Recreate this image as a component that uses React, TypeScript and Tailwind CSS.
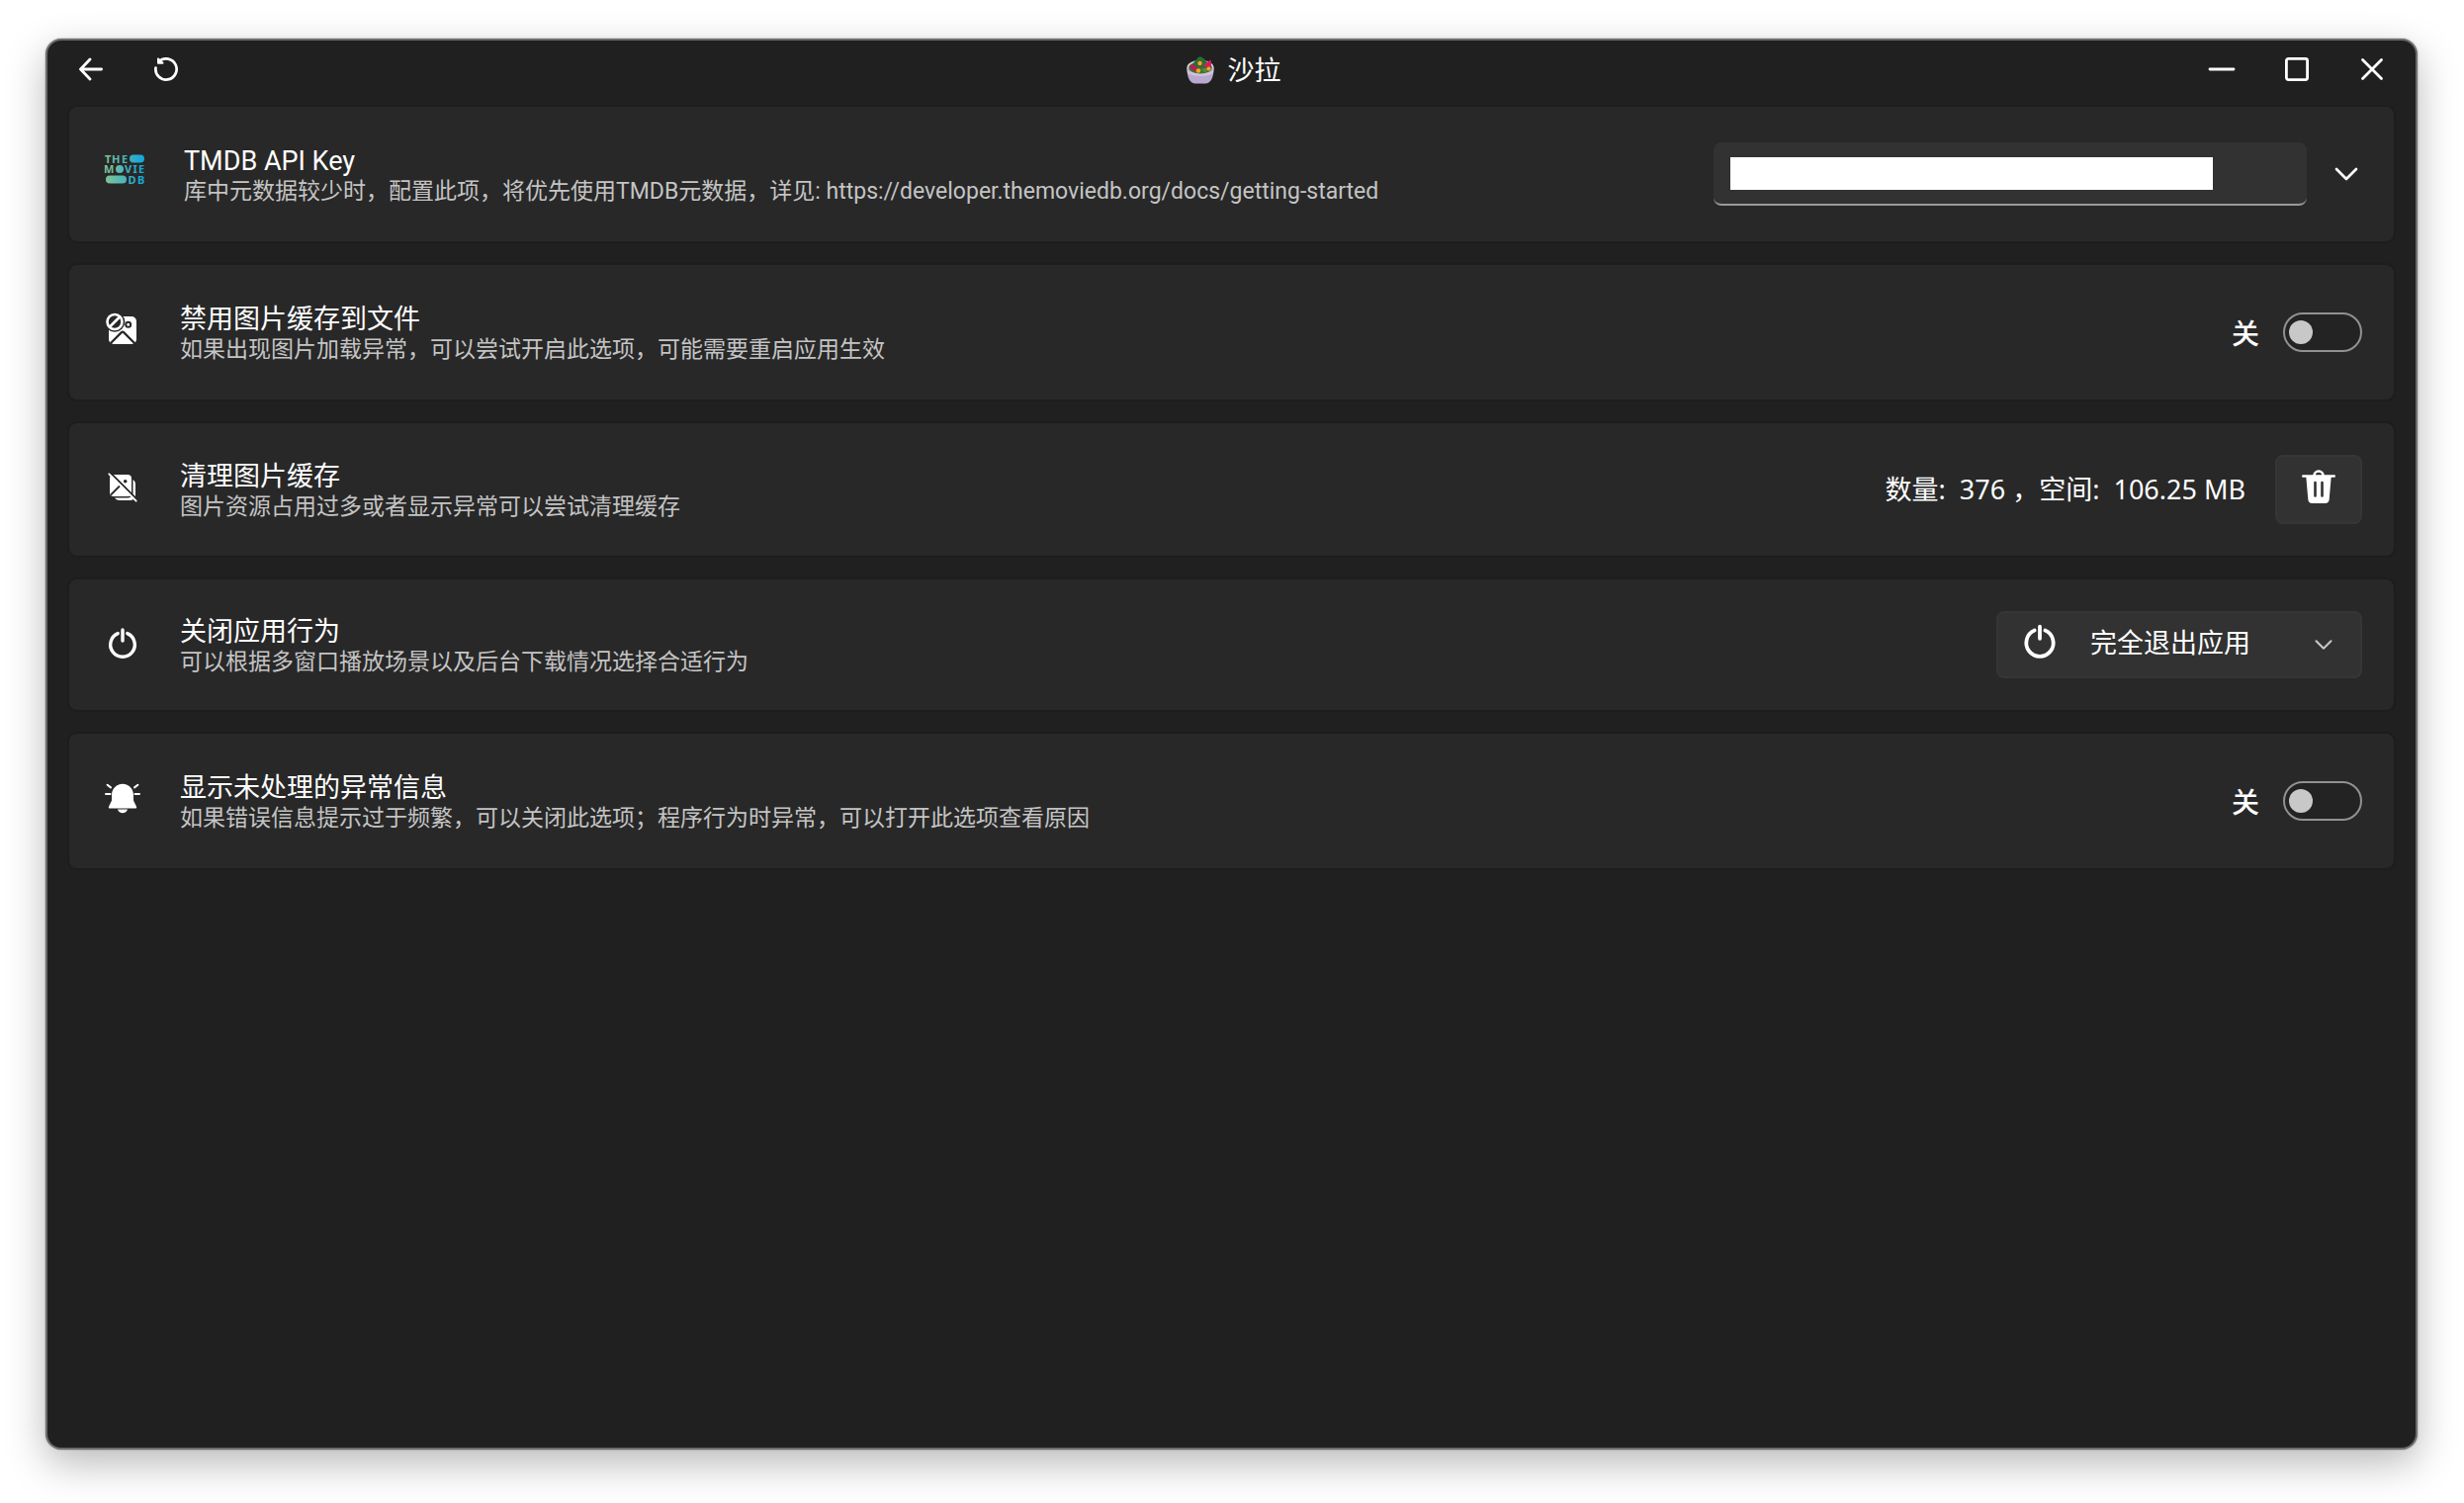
import React, { useState } from "react";
import clsx from "clsx";

type IconProps = { className?: string };

function BackIcon() {
  return (
    <svg className="size-6" viewBox="0 0 24 24" fill="none" stroke="currentColor" strokeWidth="2.8" strokeLinecap="round" strokeLinejoin="round">
      <path d="M11 2 1.5 12 11 22M1.8 12H22.6" />
    </svg>
  );
}

function ReloadIcon() {
  return (
    <svg className="size-6" viewBox="0 0 24 24" fill="none" stroke="currentColor" strokeWidth="2.7" strokeLinecap="round" strokeLinejoin="round">
      <path d="M1.5 10.5A10.600 10.600 0 1 0 5 4" />
      <path d="M4 1.500v4.300h4.500z" fill="currentColor" strokeWidth="2" />
    </svg>
  );
}

function MinimizeIcon() {
  return (
    <svg className="h-6 w-7" viewBox="0 0 28 24" stroke="currentColor" strokeWidth="2.8" strokeLinecap="round">
      <path d="M2 12h24" />
    </svg>
  );
}

function MaximizeIcon() {
  return (
    <svg className="size-6" viewBox="0 0 24 24" fill="none" stroke="currentColor" strokeWidth="2.8">
      <rect x="1.4" y="1.4" width="21.200" height="21.200" rx="2" />
    </svg>
  );
}

function CloseIcon() {
  return (
    <svg className="size-6" viewBox="0 0 24 24" stroke="currentColor" strokeWidth="2.8" strokeLinecap="round">
      <path d="m2.500 2.500 19 19M21.500 2.500l-19 19" />
    </svg>
  );
}

function SaladIcon() {
  return (
    <svg className="size-7" viewBox="0 0 28 28">
      <ellipse cx="14" cy="11.5" rx="13.6" ry="7.8" fill="#d9d0e6" />
      <path d="M.4 11.5C.4 22 4 27.6 9 27.6h10c5 0 8.600-5.600 8.600-16.100-3 6-24 6-27.200 0z" fill="#b9a8cf" />
      <path d="M.6 13c2 5.500 24.800 5.500 26.800 0l-.3 3.500c-3 4.500-23 4.500-26.200 0z" fill="#cfc3e0" />
      <ellipse cx="14" cy="11.600" rx="11.800" ry="6" fill="#44702a" />
      <path d="M6.500 8.500C7.500 4 10 4.500 11 2c2-2.500 5-1.500 6 0 2 1 2.500 3 4 4l-2.500 5.500H9z" fill="#2f6b34" />
      <path d="M3.500 9.500c2-2 4-1.500 5.500.5 1 2 3 3.500 5.500 4-4.500 2-10 .5-11-4.500z" fill="#c2185b" />
      <path d="M24.500 3.500c1 3 .5 5.500-.5 7.500-3 0-5.500-.5-7.500-2z" fill="#d81b60" />
      <path d="M15 13.500c2-2 6-2 8-.5l-4 3.500z" fill="#5b8a35" />
      <circle cx="13.500" cy="7" r="2.200" fill="#f5a623" />
      <circle cx="12" cy="14.500" r="2.200" fill="#f5a623" />
      <circle cx="22.500" cy="12.500" r="2" fill="#f5a623" />
    </svg>
  );
}

function TmdbLogo() {
  return (
    <svg className="mb-1.5 h-[30px] w-10 overflow-visible" viewBox="0 0 40 30" aria-hidden="true">
      <defs>
        <linearGradient id="tmdb" x1="0" x2="40" y1="0" y2="0" gradientUnits="userSpaceOnUse">
          <stop offset="0" stopColor="#82c595" />
          <stop offset="1" stopColor="#12a5dc" />
        </linearGradient>
      </defs>
      <g fill="url(#tmdb)" fontFamily="Noto Sans, sans-serif" fontWeight="700" fontSize="11">
        <text x="0" y="8.500">T</text>
        <text x="7" y="8.500">H</text>
        <text x="17" y="8.500">E</text>
        <rect x="25" y="0.500" width="15" height="8" rx="4" />
        <text x="-1" y="19">M</text>
        <circle cx="15" cy="15" r="4" />
        <text x="20" y="19">V</text>
        <text x="28.500" y="19">I</text>
        <text x="34" y="19">E</text>
        <rect x="1" y="21.500" width="21" height="8" rx="4" />
        <text x="23.500" y="29.500">D</text>
        <text x="33" y="29.500">B</text>
      </g>
    </svg>
  );
}

function ImageBlockIcon() {
  return (
    <svg className="mb-1 size-9" viewBox="0 0 36 36" fill="none">
      <rect x="4" y="6" width="28" height="28" rx="5" fill="#fff" />
      <path d="m3 36 13.600-13.600a2 2 0 0 1 2.800 0L33 36" stroke="#282828" strokeWidth="2.200" />
      <circle cx="23.700" cy="14.300" r="2.500" stroke="#282828" strokeWidth="2" />
      <circle cx="10" cy="11.500" r="10.300" fill="#282828" />
      <circle cx="10" cy="11.500" r="7.500" stroke="#fff" strokeWidth="2.600" />
      <path d="m5 16.500 10-10" stroke="#fff" strokeWidth="2.600" />
    </svg>
  );
}

function ImageOffIcon() {
  return (
    <svg className="size-9" viewBox="0 0 36 36" fill="none">
      <rect x="9.500" y="9.500" width="21.500" height="21.500" rx="5" fill="#fff" />
      <rect x="4" y="4" width="24.500" height="24.500" rx="5" fill="#282828" />
      <rect x="5" y="5" width="22" height="22" rx="4" fill="#fff" />
      <circle cx="20.700" cy="11.700" r="1.800" fill="#282828" />
      <path d="m6 25.500 9-9" stroke="#282828" strokeWidth="1.800" />
      <path d="m5.500 3 29 29" stroke="#282828" strokeWidth="1.800" />
      <path d="m4.300 4.300 27.400 27.400" stroke="#fff" strokeWidth="1.800" strokeLinecap="round" />
    </svg>
  );
}

function PowerIcon({ className = "size-9" }: IconProps) {
  return (
    <svg className={className} viewBox="0 0 36 36" fill="none" stroke="currentColor" strokeWidth="3.400" strokeLinecap="round">
      <path d="M18 5v11" />
      <path d="M13.200 8.600a12.300 12.300 0 1 0 9.600 0" />
    </svg>
  );
}

function BellIcon() {
  return (
    <svg className="size-9" viewBox="0 0 36 36" fill="#fff">
      <path d="M18 2.700C11.500 2.700 7 8 7 14v5.500L4 25.700c-.4 1 0 1.800 1 1.800h26c1 0 1.400-.8 1-1.800l-3-6.200V14c0-6-4.500-11.300-11-11.300z" />
      <path d="M13 28.500h10c-.8 2.500-2.600 3.800-5 3.800s-4.200-1.300-5-3.800z" />
      <path d="M1 13h4.500M30.500 13H35M2.600 3.700 6 6.400M33.400 3.700 30 6.400" stroke="#fff" strokeWidth="2" strokeLinecap="round" />
    </svg>
  );
}

function TrashIcon() {
  return (
    <svg className="h-9 w-[34px]" viewBox="0 0 34 36" fill="none">
      <path d="M12.500 7a4.500 4.500 0 0 1 9 0" stroke="#fff" strokeWidth="2.600" />
      <path d="M1.300 7.500h31.400" stroke="#fff" strokeWidth="2.600" strokeLinecap="round" />
      <path d="M4.300 8h25.400l-2 23c-.2 2.500-1.800 4-4.200 4h-13c-2.400 0-4-1.500-4.200-4z" fill="#fff" />
      <path d="M13.500 14v13.500M20.500 14v13.500" stroke="#323232" strokeWidth="2.600" strokeLinecap="round" />
    </svg>
  );
}

function ChevronIcon({ className }: IconProps) {
  return (
    <svg className={className} viewBox="0 0 24 14" fill="none" stroke="currentColor" strokeWidth="2.700" strokeLinecap="round" strokeLinejoin="round">
      <path d="m2 2 10 10L22 2" />
    </svg>
  );
}

function BarButton({ label, children }: { label: string; children: React.ReactNode }) {
  return (
    <button type="button" aria-label={label} className="flex h-full w-[76px] items-center justify-center">
      {children}
    </button>
  );
}

function TitleBar() {
  return (
    <header className="grid h-[58px] grid-cols-[1fr_auto_1fr] items-center px-1.5">
      <div className="flex h-full">
        <BarButton label="返回"><BackIcon /></BarButton>
        <BarButton label="刷新"><ReloadIcon /></BarButton>
      </div>
      <h1 className="flex items-center gap-3.5 pt-0.5 pl-1 text-[27px] leading-9">
        <SaladIcon />
        沙拉
      </h1>
      <div className="flex h-full justify-end">
        <BarButton label="最小化"><MinimizeIcon /></BarButton>
        <BarButton label="最大化"><MaximizeIcon /></BarButton>
        <BarButton label="关闭"><CloseIcon /></BarButton>
      </div>
    </header>
  );
}

type CardProps = {
  id: string;
  icon: React.ReactNode;
  title: string;
  desc: string;
  children: React.ReactNode;
};

function SettingCard({ id, icon, title, desc, children }: CardProps) {
  return (
    <section className="flex items-center rounded-[10px] border-2 border-[#1d1d1d] bg-[#282828] py-8 pr-8 pl-9">
      <div className="mb-1 shrink-0">{icon}</div>
      <div className="ml-10 flex-1 pt-1 font-[Roboto,'Noto_Sans_CJK_SC',sans-serif]">
        <label htmlFor={id} className="block text-[27px] leading-8">{title}</label>
        <p className="text-[23px] leading-[30px] text-[#c4c4c4]">{desc}</p>
      </div>
      {children}
    </section>
  );
}

function Toggle({ id }: { id: string }) {
  const [on, setOn] = useState(false);
  return (
    <div className="flex items-center gap-6 py-4">
      <span className="pt-0.5 text-[28px] leading-[38px] font-medium">{on ? "开" : "关"}</span>
      <input
        id={id}
        type="checkbox"
        role="switch"
        checked={on}
        onChange={(e) => setOn(e.target.checked)}
        className={clsx(
          "flex h-10 w-20 appearance-none items-center rounded-full border-2 border-[#919191] bg-[#232323] px-1",
          "before:block before:size-6 before:rounded-full before:bg-[#c8c8c8] before:content-['']",
          on && "justify-end"
        )}
      />
    </div>
  );
}

export default function App() {
  return (
    <div className="flex min-h-screen flex-col bg-white pt-[39px] pr-[47px] pb-[54px] pl-[46px] font-['Noto_Sans','Noto_Sans_CJK_SC',sans-serif] text-white">
      <main className="flex flex-1 flex-col rounded-2xl border-2 border-[#6c6c6c] bg-[#202020] shadow-[0_0_2px_rgba(0,0,0,0.4),0_14px_40px_rgba(0,0,0,0.28)]">
        <TitleBar />

        <div className="flex flex-col gap-5 px-5 pt-[7px] pb-5">
          <SettingCard
            id="tmdb-key"
            icon={<TmdbLogo />}
            title="TMDB API Key"
            desc="库中元数据较少时，配置此项，将优先使用TMDB元数据，详见: https://developer.themoviedb.org/docs/getting-started"
          >
            <div className="flex items-center gap-6 py-1">
              <div className="relative">
                <input
                  id="tmdb-key"
                  type="text"
                  className="block h-16 w-[600px] rounded-lg border-b-2 border-[#9a9a9a] bg-[#323232] px-4 text-[23px]"
                />
                <div className="pointer-events-none absolute top-[15px] left-[17px] h-[33px] w-[488px] bg-white" />
              </div>
              <button type="button" aria-label="展开" className="flex size-8 items-center justify-center">
                <ChevronIcon className="h-3.5 w-6" />
              </button>
            </div>
          </SettingCard>

          <SettingCard
            id="no-cache"
            icon={<ImageBlockIcon />}
            title="禁用图片缓存到文件"
            desc="如果出现图片加载异常，可以尝试开启此选项，可能需要重启应用生效"
          >
            <Toggle id="no-cache" />
          </SettingCard>

          <SettingCard
            id="clear-cache"
            icon={<ImageOffIcon />}
            title="清理图片缓存"
            desc="图片资源占用过多或者显示异常可以尝试清理缓存"
          >
            <div className="flex items-center gap-[30px]">
              <span className="text-[27px] leading-9 whitespace-pre">{"数量:  376 ，空间:  106.25 MB"}</span>
              <button
                id="clear-cache"
                type="button"
                className="flex h-[70px] w-[88px] items-center justify-center rounded-lg border-2 border-[#363636] bg-[#323232] pb-1.5"
              >
                <TrashIcon />
              </button>
            </div>
          </SettingCard>

          <SettingCard
            id="close-action"
            icon={<PowerIcon />}
            title="关闭应用行为"
            desc="可以根据多窗口播放场景以及后台下载情况选择合适行为"
          >
            <div className="relative">
              <select
                id="close-action"
                className="block h-[68px] w-[370px] appearance-none rounded-lg border-2 border-[#363636] bg-[#323232] pb-1 pl-[93px] text-[27px]"
              >
                <option>完全退出应用</option>
              </select>
              <PowerIcon className="pointer-events-none absolute top-2.5 left-6 size-10" />
              <ChevronIcon className="pointer-events-none absolute top-7 right-[30px] h-3 w-[18px] text-[#c8c8c8]" />
            </div>
          </SettingCard>

          <SettingCard
            id="show-errors"
            icon={<BellIcon />}
            title="显示未处理的异常信息"
            desc="如果错误信息提示过于频繁，可以关闭此选项；程序行为时异常，可以打开此选项查看原因"
          >
            <Toggle id="show-errors" />
          </SettingCard>
        </div>
      </main>
    </div>
  );
}
